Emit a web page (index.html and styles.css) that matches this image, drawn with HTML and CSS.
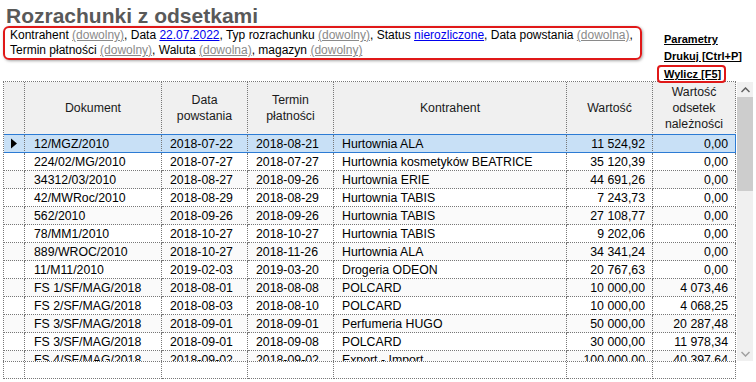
FILE: index.html
```html
<!DOCTYPE html>
<html lang="pl">
<head>
<meta charset="utf-8">
<title>Rozrachunki z odsetkami</title>
<link rel="stylesheet" href="styles.css">
</head>
<body>
<div class="page">
  <div class="top">
    <div class="head-left">
      <h1 class="title">Rozrachunki z odsetkami</h1>
      <div class="filters">
        Kontrahent <a class="any">(dowolny)</a>, Data <a class="val">22.07.2022</a>, Typ rozrachunku <a class="any">(dowolny)</a>, Status <a class="val">nierozliczone</a>, Data powstania <a class="any">(dowolna)</a>,<br>
        Termin płatności <a class="any">(dowolny)</a>, Waluta <a class="any">(dowolna)</a>, magazyn <a class="any">(dowolny)</a>
      </div>
    </div>
    <div class="actions">
      <a class="action">Parametry</a>
      <a class="action">Drukuj [Ctrl+P]</a>
      <a class="action boxed">Wylicz [F5]</a>
    </div>
  </div>

  <div class="grid-wrap">
    <div class="grid-main">
      <div class="table">
        <div class="row head">
          <div class="c"></div>
          <div class="c">Dokument</div>
          <div class="c">Data<br>powstania</div>
          <div class="c">Termin<br>płatności</div>
          <div class="c">Kontrahent</div>
          <div class="c">Wartość</div>
          <div class="c">Wartość<br>odsetek<br>należności</div>
        </div>
        <div class="row sel">
          <div class="c ind"><svg width="8" height="11" viewBox="0 0 8 11"><path d="M1 0.5 L7 5.5 L1 10.5 Z" fill="#000"/></svg></div>
          <div class="c l">12/MGZ/2010</div><div class="c l">2018-07-22</div><div class="c l">2018-08-21</div><div class="c l">Hurtownia ALA</div><div class="c r">11 524,92</div><div class="c r">0,00</div>
        </div>
        <div class="row"><div class="c"></div><div class="c l">224/02/MG/2010</div><div class="c l">2018-07-27</div><div class="c l">2018-07-27</div><div class="c l">Hurtownia kosmetyków BEATRICE</div><div class="c r">35 120,39</div><div class="c r">0,00</div></div>
        <div class="row alt"><div class="c"></div><div class="c l">34312/03/2010</div><div class="c l">2018-08-27</div><div class="c l">2018-09-26</div><div class="c l">Hurtownia ERIE</div><div class="c r">44 691,26</div><div class="c r">0,00</div></div>
        <div class="row"><div class="c"></div><div class="c l">42/MWRoc/2010</div><div class="c l">2018-08-29</div><div class="c l">2018-08-29</div><div class="c l">Hurtownia TABIS</div><div class="c r">7 243,73</div><div class="c r">0,00</div></div>
        <div class="row alt"><div class="c"></div><div class="c l">562/2010</div><div class="c l">2018-09-26</div><div class="c l">2018-09-26</div><div class="c l">Hurtownia TABIS</div><div class="c r">27 108,77</div><div class="c r">0,00</div></div>
        <div class="row"><div class="c"></div><div class="c l">78/MM1/2010</div><div class="c l">2018-10-27</div><div class="c l">2018-10-27</div><div class="c l">Hurtownia TABIS</div><div class="c r">9 202,06</div><div class="c r">0,00</div></div>
        <div class="row alt"><div class="c"></div><div class="c l">889/WROC/2010</div><div class="c l">2018-10-27</div><div class="c l">2018-11-26</div><div class="c l">Hurtownia ALA</div><div class="c r">34 341,24</div><div class="c r">0,00</div></div>
        <div class="row"><div class="c"></div><div class="c l">11/M11/2010</div><div class="c l">2019-02-03</div><div class="c l">2019-03-20</div><div class="c l">Drogeria ODEON</div><div class="c r">20 767,63</div><div class="c r">0,00</div></div>
        <div class="row alt"><div class="c"></div><div class="c l">FS 1/SF/MAG/2018</div><div class="c l">2018-08-01</div><div class="c l">2018-08-08</div><div class="c l">POLCARD</div><div class="c r">10 000,00</div><div class="c r">4 073,46</div></div>
        <div class="row"><div class="c"></div><div class="c l">FS 2/SF/MAG/2018</div><div class="c l">2018-08-03</div><div class="c l">2018-08-10</div><div class="c l">POLCARD</div><div class="c r">10 000,00</div><div class="c r">4 068,25</div></div>
        <div class="row alt"><div class="c"></div><div class="c l">FS 3/SF/MAG/2018</div><div class="c l">2018-09-01</div><div class="c l">2018-09-01</div><div class="c l">Perfumeria HUGO</div><div class="c r">50 000,00</div><div class="c r">20 287,48</div></div>
        <div class="row"><div class="c"></div><div class="c l">FS 3/SF/MAG/2018</div><div class="c l">2018-09-01</div><div class="c l">2018-09-08</div><div class="c l">POLCARD</div><div class="c r">30 000,00</div><div class="c r">11 978,34</div></div>
        <div class="row alt"><div class="c"></div><div class="c l">FS 4/SF/MAG/2018</div><div class="c l">2018-09-02</div><div class="c l">2018-09-02</div><div class="c l">Export - Import</div><div class="c r">100 000,00</div><div class="c r">40 397,64</div></div>
      </div>
      <div class="scroll">
        <div class="arrow"><svg width="9" height="6" viewBox="0 0 9 6"><path d="M0.5 5 L4.5 1 L8.5 5" fill="none" stroke="#606060" stroke-width="1.5"/></svg></div>
        <div class="track"><div class="thumb"></div></div>
        <div class="arrow"><svg width="9" height="6" viewBox="0 0 9 6"><path d="M0.5 1 L4.5 5 L8.5 1" fill="none" stroke="#a0a0a0" stroke-width="1.5"/></svg></div>
      </div>
    </div>
    <div class="row foot">
      <div class="c"></div><div class="c"></div><div class="c"></div><div class="c"></div><div class="c"></div><div class="c"></div><div class="c"></div>
    </div>
  </div>
</div>
</body>
</html>
```
FILE: styles.css
```css
html, body {
  margin: 0;
  padding: 0;
  background: #fff;
}
.page {
  width: 756px;
  height: 382px;
  overflow: hidden;
  font-family: "Liberation Sans", Arial, sans-serif;
  color: #000;
}
.top {
  display: flex;
  height: 81px;
  padding-left: 3px;
  box-sizing: border-box;
  position: relative;
  z-index: 2;
}
.head-left {
  width: 639px;
  padding-top: 6px;
}
.title {
  margin: 0 0 0 3px;
  font-size: 21px;
  line-height: 20px;
  font-weight: bold;
  color: #595959;
}
.filters {
  border: 2px solid #e01818;
  border-radius: 6px;
  padding: 0 5px;
  font-size: 12px;
  line-height: 15px;
  box-shadow: 1px 1px 3px rgba(0, 0, 0, 0.35);
  white-space: nowrap;
}
.filters a {
  text-decoration: underline;
  cursor: pointer;
}
.filters .any { color: #8a8a8a; }
.filters .val { color: #0000ee; }

.actions {
  margin-left: 22px;
  padding-top: 31px;
  display: flex;
  flex-direction: column;
  align-items: flex-start;
}
.action {
  display: block;
  font-size: 11px;
  font-weight: bold;
  line-height: 16.5px;
  color: #000;
  text-decoration: underline;
  cursor: pointer;
}
.action.boxed {
  margin-left: -7px;
  margin-top: 1px;
  padding: 0 3px 0 5px;
  line-height: 14px;
  border: 2px solid #e01818;
  border-radius: 4px;
  background: #fff;
}

.grid-wrap {
  margin-left: 3px;
  font-size: 12.3px;
}
.grid-main {
  display: flex;
}
.table {
  width: 733px;
  height: 280px;
  box-sizing: border-box;
  border-left: 1px dotted #777;
  border-top: 1px dotted #777;
  overflow: hidden;
}
.row {
  display: grid;
  grid-template-columns: 21px 137px 86px 86px 233px 86px 83px;
  height: 18px;
  position: relative;
}
.row.alt { background: #fafafa; }
.c {
  box-sizing: border-box;
  border-right: 1px dotted #777;
  border-bottom: 1px dotted #777;
  padding-top: 1px;
  line-height: 16px;
  white-space: nowrap;
  overflow: hidden;
}
.c.l { padding-left: 8px; }
.row .c.l:nth-child(2) { padding-left: 9px; }
.c.r { text-align: right; padding-right: 7px; }
.row.head {
  height: 53px;
  background: #f0f0f0;
}
.row.head .c {
  display: flex;
  align-items: center;
  justify-content: center;
  text-align: center;
  color: #1a1a1a;
  padding-top: 0;
}
.row.sel { background: #c8e0f6; }
.row.sel::after {
  content: "";
  position: absolute;
  left: -1px;
  top: -1px;
  right: 0;
  bottom: 0;
  border: 1px solid #2c7bd4;
  pointer-events: none;
}
.c.ind {
  display: flex;
  align-items: center;
  padding: 0 0 0 6px;
}
.scroll {
  width: 16px;
  height: 279px;
  margin-top: 1px;
  margin-left: 1px;
  background: #f0f0f0;
  display: flex;
  flex-direction: column;
}
.arrow {
  height: 15px;
  display: flex;
  align-items: center;
  justify-content: center;
}
.track {
  flex: 1;
}
.thumb {
  height: 94px;
  background: #cdcdcd;
}
.row.foot {
  width: 733px;
  height: 18px;
  box-sizing: border-box;
  border-left: 1px dotted #777;
  border-top: 1px dotted #777;
}
.row.foot .c { padding: 0; }
```
